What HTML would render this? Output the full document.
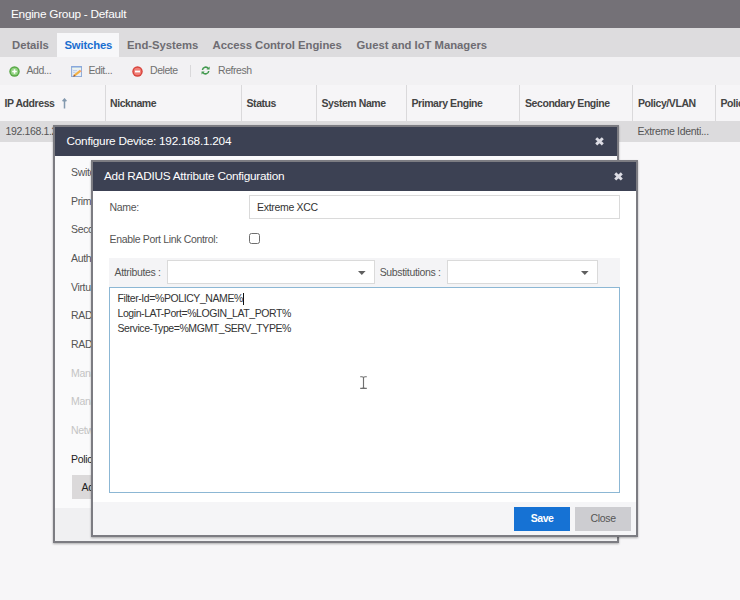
<!DOCTYPE html>
<html><head><meta charset="utf-8">
<style>
*{box-sizing:border-box;margin:0;padding:0}
html,body{width:740px;height:600px;overflow:hidden;background:#f7f6f8;font-family:"Liberation Sans",sans-serif;font-size:10.5px;letter-spacing:-0.3px;color:#444}
body>div,body>svg,body>span{position:absolute;white-space:nowrap}
#hdr{left:0;top:0;width:740px;height:28px;background:#747177;color:#fff;font-size:11.8px;letter-spacing:-0.25px;line-height:28px;padding-left:11px}
#tabs{left:0;top:28px;width:740px;height:29px;background:#dddcde}
.tab{top:32.700px;height:24px;line-height:24px;font-weight:bold;font-size:11.3px;letter-spacing:-0.03px;color:#6e6c72}
.tabbg{left:56.700px;top:33px;width:62.300px;height:24px;background:#f7f7f9}
#tb{left:0;top:57px;width:740px;height:28px;background:#f2f1f3}
.tbi{top:56.200px;line-height:28px;color:#707070;letter-spacing:-0.45px}
#th{left:0;top:85px;width:740px;height:36px;background:#f6f5f7}
.th{top:85px;height:36px;line-height:36px;font-weight:bold;letter-spacing:-0.43px;color:#444}
.sep{top:85px;width:1px;height:36px;background:#dad9db}
#row{left:0;top:121.200px;width:740px;height:20.400px;background:#dcdbdd}
.rt{top:121px;line-height:20px;color:#555}
.win{background:#7c7c82;box-shadow:0 .5px 2px rgba(0,0,0,.3)}
.wh{background:#3c4153}
.wt{color:#fff;font-size:11.8px;letter-spacing:-0.25px}
.lbl{color:#545454;letter-spacing:-0.34px}
.dis{color:#c4c4c4}
.inp{border:1px solid #dadada;background:#fff}
</style></head><body>
<div id="hdr">Engine Group - Default</div>
<div id="tabs"></div>
<div class="tabbg"></div>
<div class="tab" style="left:12px">Details</div>
<div class="tab" style="left:64.500px;color:#1a6fd0;letter-spacing:-0.17px">Switches</div>
<div class="tab" style="left:127px">End-Systems</div>
<div class="tab" style="left:212.500px">Access Control Engines</div>
<div class="tab" style="left:356.500px">Guest and IoT Managers</div>
<div id="tb"></div>
<svg style="left:9px;top:66px" width="11" height="11" viewBox="0 0 11 11"><circle cx="5.5" cy="5.5" r="5.200" fill="#58a847"/><circle cx="5.5" cy="5.5" r="3.800" fill="#93d382"/><path d="M5.500 3.200v4.600M3.200 5.500h4.600" stroke="#fff" stroke-width="1.6"/></svg>
<div class="tbi" style="left:26.500px">Add...</div>
<svg style="left:70.800px;top:65.800px" width="11.500" height="11.200" viewBox="0 0 11.500 11.200"><rect x="0.600" y="0.600" width="10" height="10" fill="#e9eef7" stroke="#8eabd8" stroke-width="1.100"/><rect x="0.300" y="0.200" width="10.600" height="1.400" fill="#86a7dc"/><rect x="1.200" y="1.800" width="8.800" height="1" fill="#eef8e6"/><path d="M2 4.600h4M2 6.400h2.500" stroke="#b7c8e6" stroke-width=".9"/><path d="M3.600 9.300L9.600 4.700" stroke="#f2b146" stroke-width="2.200"/><path d="M8.700 4.100l1.700 1.900" stroke="#ee9a8a" stroke-width="1"/><path d="M2.300 10.700l.5-2.200 1.700 1.400z" fill="#9a4a12"/></svg>
<div class="tbi" style="left:88.500px">Edit...</div>
<svg style="left:132px;top:66px" width="11" height="11" viewBox="0 0 11 11"><circle cx="5.5" cy="5.5" r="5.200" fill="#d8433c"/><circle cx="5.5" cy="5.5" r="3.800" fill="#f07f77"/><path d="M3 5.500h5" stroke="#fff" stroke-width="1.8"/></svg>
<div class="tbi" style="left:150px">Delete</div>
<div style="left:190px;top:65px;width:1px;height:12px;background:#d9d8da"></div>
<svg style="left:201.300px;top:66px" width="9.200" height="9" viewBox="0 0 10 10"><path d="M1.500 4.500A3.500 3.500 0 0 1 8 3M8.500 5.500A3.500 3.500 0 0 1 2 7" fill="none" stroke="#43994f" stroke-width="1.7"/><path d="M9.500 .5v3.500h-3.500zM.5 9.500v-3.500h3.500z" fill="#43994f"/></svg>
<div class="tbi" style="left:218px">Refresh</div>
<div id="th"></div>
<div class="th" style="left:4.500px">IP Address</div>
<svg style="left:61px;top:97.500px" width="7" height="11" viewBox="0 0 7 11"><path d="M3.500 1.400v9.100M1.600 3.300l1.900-2.200 1.900 2.200" fill="none" stroke="#8399ae" stroke-width="1.500"/></svg>
<div class="sep" style="left:105px"></div><div class="th" style="left:110px">Nickname</div>
<div class="sep" style="left:241px"></div><div class="th" style="left:246.500px">Status</div>
<div class="sep" style="left:316px"></div><div class="th" style="left:321.500px">System Name</div>
<div class="sep" style="left:406px"></div><div class="th" style="left:411.500px">Primary Engine</div>
<div class="sep" style="left:519px"></div><div class="th" style="left:525px">Secondary Engine</div>
<div class="sep" style="left:632px"></div><div class="th" style="left:638px">Policy/VLAN</div>
<div class="sep" style="left:715px"></div><div class="th" style="left:720.500px">Policy</div>
<div id="row"></div>
<div class="rt" style="left:5.500px;letter-spacing:-0.36px">192.168.1.204</div>
<div class="rt" style="left:637.500px">Extreme Identi...</div>

<!-- back window -->
<div class="win" style="left:53.300px;top:125.300px;width:565.500px;height:417.300px"></div>
<div style="left:55px;top:150px;width:562.100px;height:390.900px;background:#fafafb"></div>
<div class="wh" style="left:55px;top:127px;width:562.100px;height:28.600px"></div>
<div class="wt" style="left:66.500px;top:126.500px;line-height:28px">Configure Device: 192.168.1.204</div>
<svg style="left:595px;top:137.200px" width="9" height="8.600" viewBox="0 0 9 8.500"><path d="M1.200 1.200l6.600 6.100M7.800 1.200l-6.600 6.100" stroke="#dcdce4" stroke-width="2.900"/></svg>
<div class="lbl" style="left:71px;top:166px">Switch Type:</div>
<div class="lbl" style="left:71px;top:194.500px">Primary Engine:</div>
<div class="lbl" style="left:71px;top:223px">Secondary Engine:</div>
<div class="lbl" style="left:71px;top:252px">Auth. Access Type:</div>
<div class="lbl" style="left:71px;top:280.500px">Virtual Router Name:</div>
<div class="lbl" style="left:71px;top:309px">RADIUS Attributes to Send:</div>
<div class="lbl" style="left:71px;top:338px">RADIUS Accounting:</div>
<div class="lbl dis" style="left:71px;top:366.500px">Management RADIUS Server 1:</div>
<div class="lbl dis" style="left:71px;top:395px">Management RADIUS Server 2:</div>
<div class="lbl dis" style="left:71px;top:424px">Network RADIUS Server:</div>
<div class="lbl" style="left:71px;top:452.500px;color:#222">Policy Domain:</div>
<div style="left:71.500px;top:475px;width:112px;height:24px;background:#dbd9da;line-height:24px;padding-left:10px;color:#222">Advanced Settings...</div>
<div style="left:55px;top:508px;width:562.100px;height:32.900px;background:#f0f0f2"></div>

<!-- front window -->
<div class="win" style="left:91px;top:160.300px;width:547px;height:376.300px"></div>
<div style="left:92.800px;top:185px;width:543.400px;height:349.900px;background:#fff"></div>
<div class="wh" style="left:92.800px;top:162px;width:543.400px;height:28.500px"></div>
<div class="wt" style="left:104px;top:161.700px;line-height:28px">Add RADIUS Attribute Configuration</div>
<svg style="left:614px;top:172px" width="9" height="8.800" viewBox="0 0 9 8.500"><path d="M1.200 1.200l6.600 6.100M7.800 1.200l-6.600 6.100" stroke="#dcdce4" stroke-width="2.900"/></svg>
<div class="lbl" style="left:109.500px;top:200.500px">Name:</div>
<div class="inp" style="left:248.500px;top:194.500px;width:371px;height:24px;line-height:22px;padding-left:7.500px;color:#333">Extreme XCC</div>
<div class="lbl" style="left:109.500px;top:232.500px">Enable Port Link Control:</div>
<div style="left:248.800px;top:233px;width:11px;height:11px;border:1px solid #6e6e6e;border-radius:2.500px;background:#fff"></div>
<div style="left:109px;top:258px;width:510.500px;height:29px;background:#f4f4f6"></div>
<div class="lbl" style="left:114.500px;top:265.500px">Attributes :</div>
<div class="inp" style="left:167px;top:260.300px;width:207.500px;height:24px"></div>
<svg style="left:358px;top:270.800px" width="7.600" height="4" viewBox="0 0 7.600 4"><path d="M0 0h7.600l-3.800 4z" fill="#5f5f5f"/></svg>
<div class="lbl" style="left:379.700px;top:265.500px">Substitutions :</div>
<div class="inp" style="left:447px;top:260.300px;width:150.500px;height:24px"></div>
<svg style="left:581px;top:270.800px" width="7.600" height="4" viewBox="0 0 7.600 4"><path d="M0 0h7.600l-3.800 4z" fill="#5f5f5f"/></svg>
<div style="left:109.200px;top:286.500px;width:510.500px;height:206.300px;border:1.300px solid #8cb7d4;background:#fff;line-height:15px;padding:3.500px 7.300px;color:#333;letter-spacing:-0.42px">Filter-Id=%POLICY_NAME%<span style="display:inline-block;width:1px;height:12px;background:#111;vertical-align:-2.500px"></span><br>Login-LAT-Port=%LOGIN_LAT_PORT%<br>Service-Type=%MGMT_SERV_TYPE%</div>
<svg style="left:360.300px;top:376px" width="7" height="13" viewBox="0 0 7 13"><path d="M.2 .7h1.800q1.500 0 1.500 1.300q0-1.300 1.500-1.300h1.800M.2 12.300h1.800q1.500 0 1.500-1.300q0 1.300 1.500 1.300h1.800M3.500 1.500v10" stroke="#707070" fill="none" stroke-width="1.150"/></svg>
<div style="left:92.800px;top:502px;width:543.400px;height:32.900px;background:#f5f5f7"></div>
<div style="left:514px;top:507.200px;width:56.200px;height:23.600px;background:#1672d4;color:#fff;font-weight:bold;letter-spacing:-0.5px;line-height:23px;text-align:center">Save</div>
<div style="left:575px;top:507.200px;width:56.200px;height:23.600px;background:#cdcdd1;color:#555;line-height:23px;text-align:center">Close</div>
</body></html>
